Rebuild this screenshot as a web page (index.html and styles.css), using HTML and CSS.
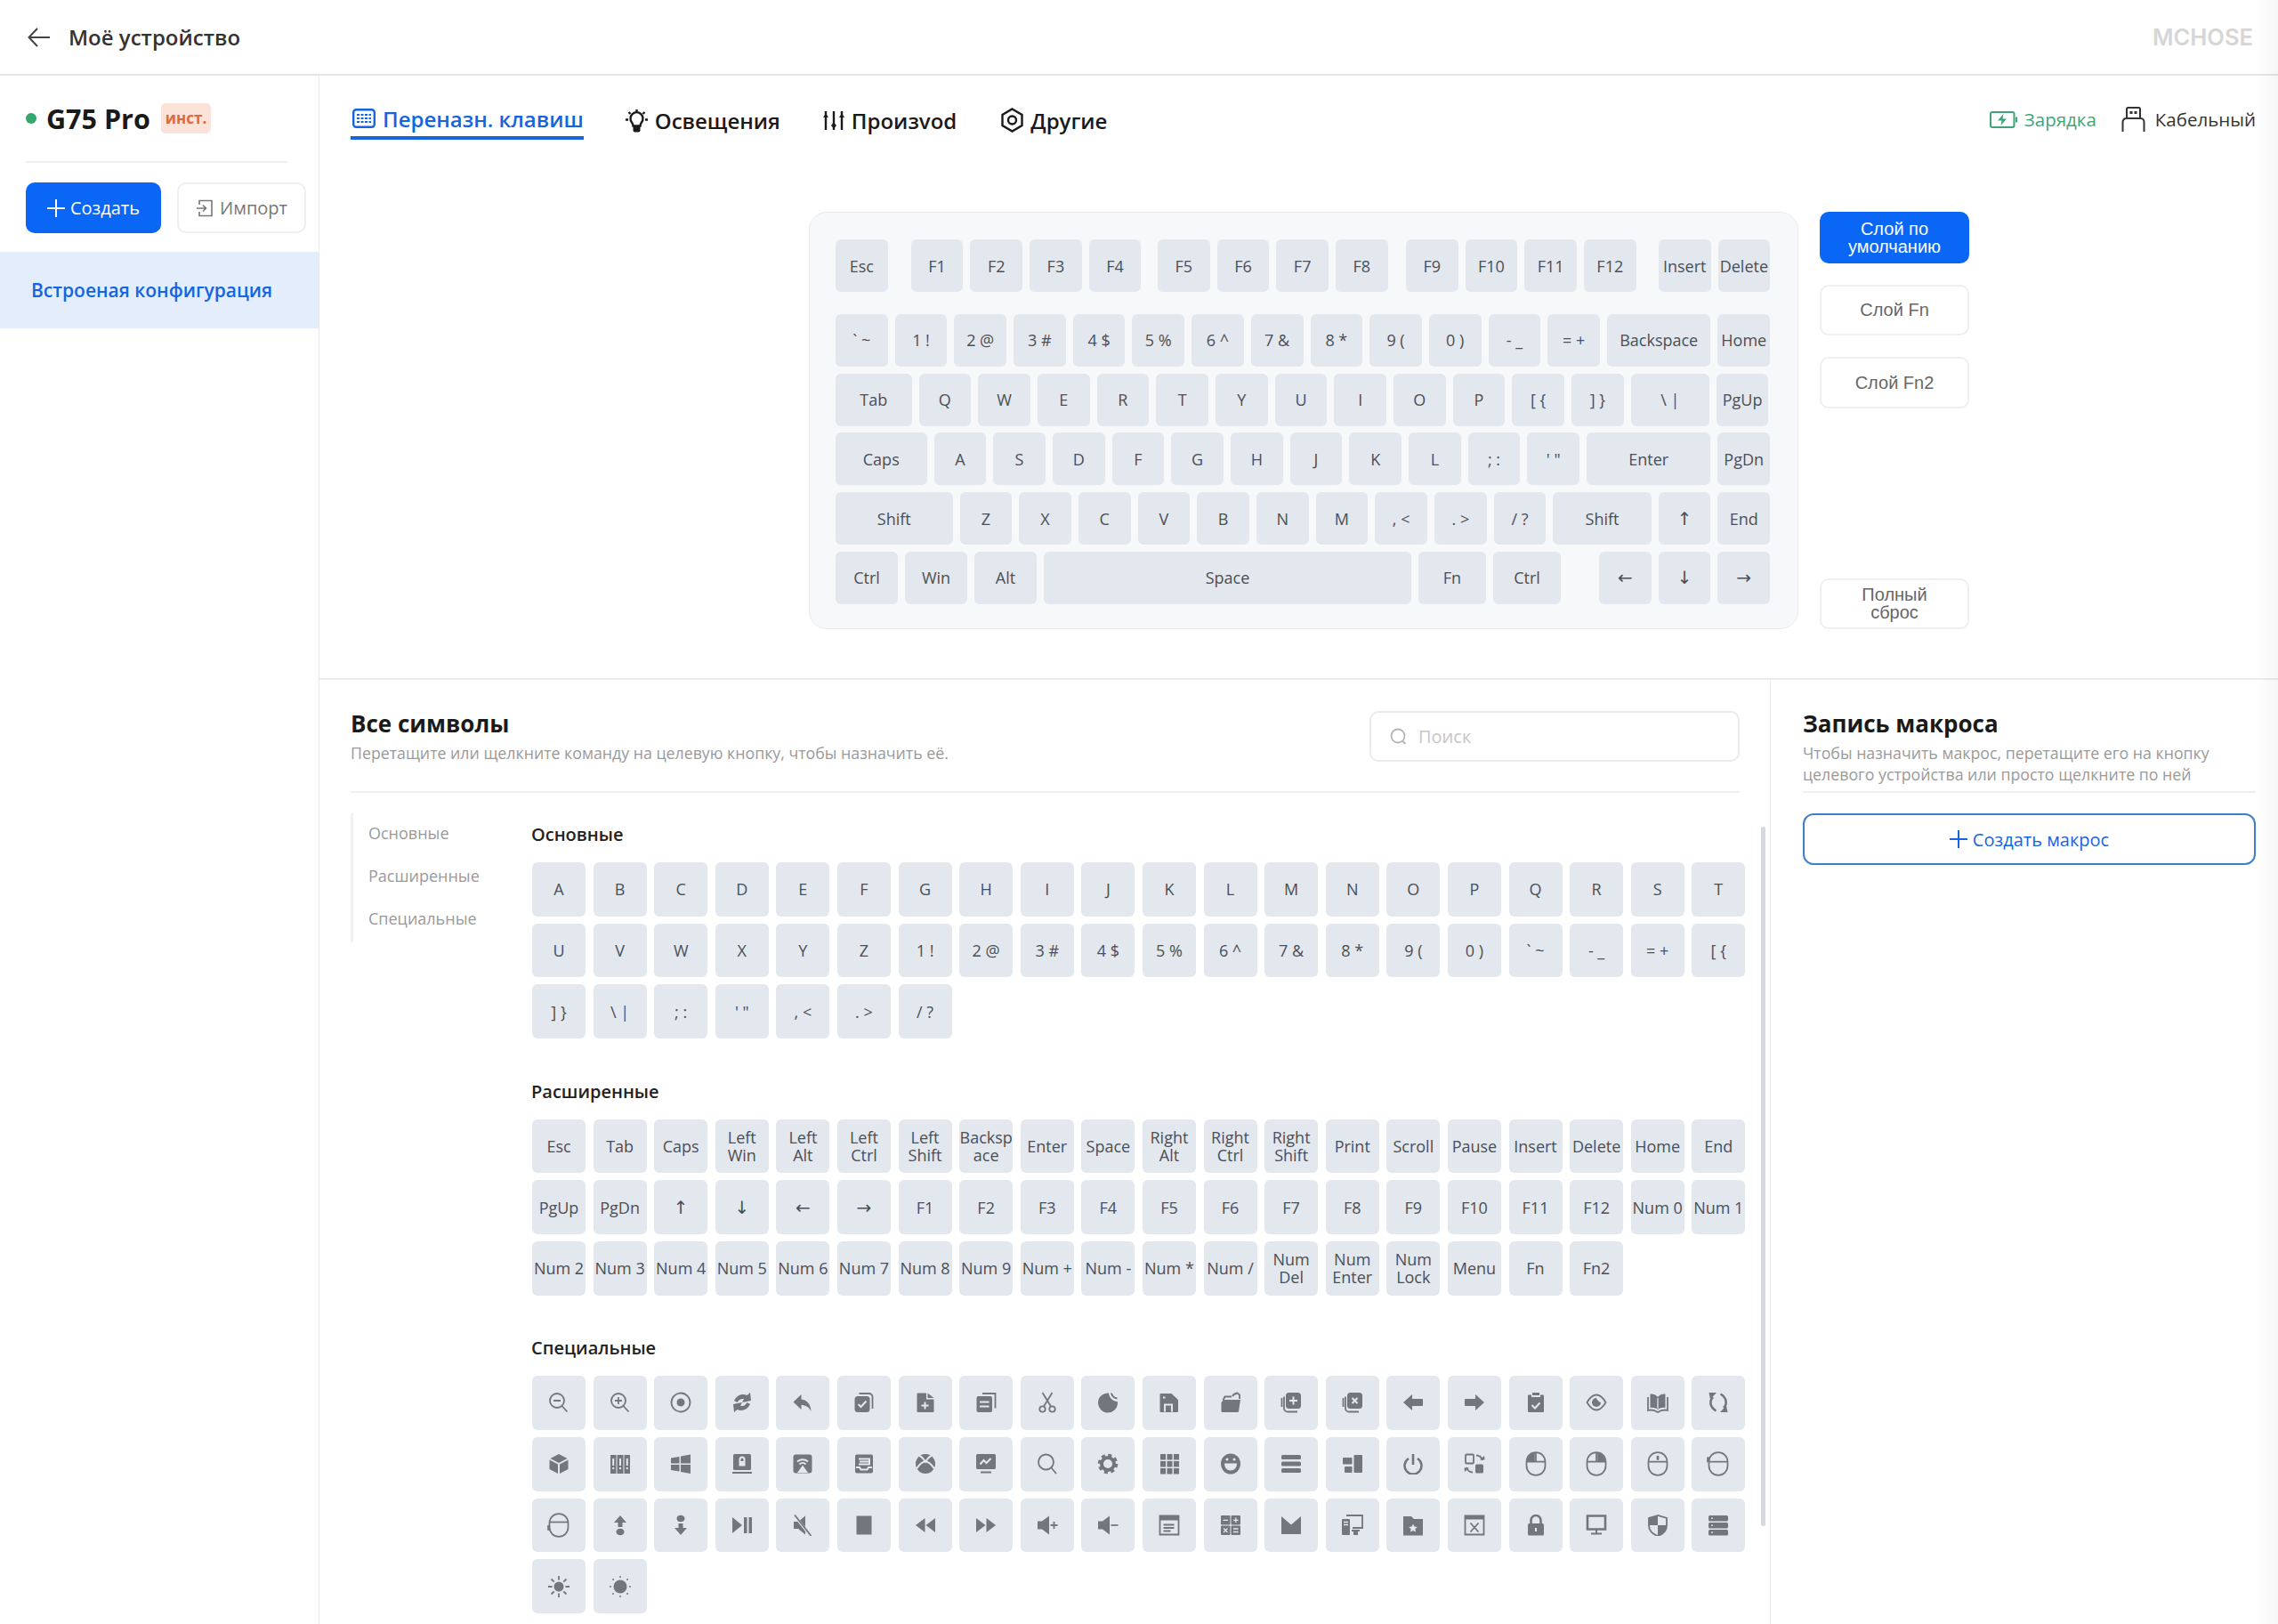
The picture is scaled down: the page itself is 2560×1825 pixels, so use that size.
FILE: index.html
```html
<!DOCTYPE html>
<html lang="ru">

<head>
    <meta charset="utf-8" />
    <title>MCHOSE</title>
    <link rel="stylesheet" href="styles.css">
</head>

<body>
    <header class="topbar">
        <svg class="back" viewBox="0 0 28 28"><path d="M26 14H3M12 4 2.5 14 12 24" /></svg>
        <span class="page-title">Моё устройство</span>
        <span class="brand">MCHOSE</span>
    </header>

    <div class="page">
        <aside class="sidebar">
            <div class="device">
                <span class="dot"></span>
                <span class="device-name">G75 Pro</span>
                <span class="badge">инст.</span>
            </div>
            <div class="side-actions">
                <button class="btn-create"><svg viewBox="0 0 20 20"><path d="M10 0v20M0 10h20" /></svg>Создать</button>
                <button class="btn-import"><svg viewBox="0 0 20 20"><path d="M4 6V1.5h14v17H4V14M1 10h10M8 6.5l3.5 3.5L8 13.5" /></svg>Импорт</button>
            </div>
            <div class="profile">Встроеная конфигурация</div>
        </aside>

        <main class="main">
            <nav class="tabs">
                <a class="tab tab-keys active">
                    <svg viewBox="0 0 26 22"><rect x="1.2" y="1.2" width="23.6" height="19.6" rx="3" /><path class="dash" d="M5 7h16M5 11h16M5 15h16" /></svg>
                    Переназн. клавиш
                </a>
                <a class="tab tab-light">
                    <svg viewBox="0 0 27 27"><path d="M8 15.5a7 7 0 1 1 11 0c-1 1.3-1.5 2.5-1.5 4h-8c0-1.5-.5-2.7-1.5-4ZM13.5 1v3M4.5 4l2 2M22.5 4l-2 2M1 12.5h3M23 12.5h3" /><path class="solid" d="M9.5 20h8v4.5a2 2 0 0 1-2 2h-4a2 2 0 0 1-2-2Z" /></svg>
                    Освещения
                </a>
                <a class="tab tab-sliders">
                    <svg viewBox="0 0 24 23"><path d="M3 1v21M12 1v21M21 1v21" /><path class="solid" d="M3 3.5 6 8H0ZM12 13.5l3 3.5-3 3.5L9 17ZM21 3.5 24 8h-6Z" /></svg>
                    Произvod
                </a>
                <a class="tab tab-hex">
                    <svg viewBox="0 0 25 28"><path d="M12.5 1.5 23.5 8v12l-11 6.500L1.5 20V8Z" /><circle cx="12.5" cy="14" r="4.5" /></svg>
                    Другие
                </a>
                <span class="status status-charge">
                    <svg viewBox="0 0 31 19"><rect x="1" y="1" width="26.5" height="17" rx="2" /><path d="M30 6.5v6" /><path class="bolt" d="M15.5 3 9 10.5h4.5L12.5 16l6.5-7.5h-4.5Z" /></svg>
                    Зарядка
                </span>
                <span class="status status-wire">
                    <svg viewBox="0 0 27 28"><path d="M1.5 28V17a4 4 0 0 1 4-4h16a4 4 0 0 1 4 4v11M6 13V2.5A1.5 1.5 0 0 1 7.5 1h12A1.5 1.5 0 0 1 21 2.5V13" /><path class="bolt" d="M9.5 5h3v3h-3zM14.5 5h3v3h-3z" /></svg>
                    Кабельный
                </span>
            </nav>

            <section class="keyboard-area">
                <div class="keyboard">
                    <div class="kb-row kb-fn">
                        <div class="key">Esc</div>
                        <div class="key gap-f1">F1</div><div class="key">F2</div><div class="key">F3</div><div class="key">F4</div>
                        <div class="key gap-f5">F5</div><div class="key">F6</div><div class="key">F7</div><div class="key">F8</div>
                        <div class="key gap-f9">F9</div><div class="key">F10</div><div class="key">F11</div><div class="key">F12</div>
                        <div class="key gap-ins">Insert</div><div class="key">Delete</div>
                    </div>
                    <div class="kb-row">
                        <div class="key">` ~</div><div class="key">1 !</div><div class="key">2 @</div><div class="key">3 #</div><div class="key">4 $</div><div class="key">5 %</div><div class="key">6 ^</div><div class="key">7 &amp;</div><div class="key">8 *</div><div class="key">9 (</div><div class="key">0 )</div><div class="key">- _</div><div class="key">= +</div>
                        <div class="key w-back">Backspace</div><div class="key">Home</div>
                    </div>
                    <div class="kb-row">
                        <div class="key w-tab">Tab</div><div class="key">Q</div><div class="key">W</div><div class="key">E</div><div class="key">R</div><div class="key">T</div><div class="key">Y</div><div class="key">U</div><div class="key">I</div><div class="key">O</div><div class="key">P</div><div class="key">[ {</div><div class="key">] }</div>
                        <div class="key w-slash">\ |</div><div class="key">PgUp</div>
                    </div>
                    <div class="kb-row">
                        <div class="key w-caps">Caps</div><div class="key">A</div><div class="key">S</div><div class="key">D</div><div class="key">F</div><div class="key">G</div><div class="key">H</div><div class="key">J</div><div class="key">K</div><div class="key">L</div><div class="key">; :</div><div class="key">' "</div>
                        <div class="key w-enter">Enter</div><div class="key">PgDn</div>
                    </div>
                    <div class="kb-row">
                        <div class="key w-lshift">Shift</div><div class="key">Z</div><div class="key">X</div><div class="key">C</div><div class="key">V</div><div class="key">B</div><div class="key">N</div><div class="key">M</div><div class="key">, &lt;</div><div class="key">. &gt;</div><div class="key">/ ?</div>
                        <div class="key w-rshift">Shift</div><div class="key arrow">↑</div><div class="key">End</div>
                    </div>
                    <div class="kb-row">
                        <div class="key w-mod">Ctrl</div><div class="key w-mod">Win</div><div class="key w-mod">Alt</div>
                        <div class="key w-space">Space</div>
                        <div class="key w-fn">Fn</div><div class="key w-fn">Ctrl</div>
                        <div class="key gap-arrows arrow">←</div><div class="key arrow">↓</div><div class="key arrow">→</div>
                    </div>
                </div>
                <div class="layers">
                    <button class="layer active">Слой по умолчанию</button>
                    <button class="layer">Слой Fn</button>
                    <button class="layer">Слой Fn2</button>
                    <button class="layer reset">Полный сброс</button>
                </div>
            </section>

            <section class="lower">
                <div class="symbols">
                    <div class="panel-head">
                        <div>
                            <h2>Все символы</h2>
                            <p>Перетащите или щелкните команду на целевую кнопку, чтобы назначить её.</p>
                        </div>
                        <div class="search">
                            <svg viewBox="0 0 20 20"><circle cx="9" cy="9" r="7.5" /><path d="M14 14.5l3.5 3.5" /></svg>
                            <span>Поиск</span>
                        </div>
                    </div>
                    <div class="symbols-body">
                        <ul class="cat-nav">
                            <li>Основные</li>
                            <li>Расширенные</li>
                            <li>Специальные</li>
                        </ul>
                        <div class="cats">
                            <h3>Основные</h3>
                            <div class="sym-grid">
                                <div class="key">A</div><div class="key">B</div><div class="key">C</div><div class="key">D</div><div class="key">E</div><div class="key">F</div><div class="key">G</div><div class="key">H</div><div class="key">I</div><div class="key">J</div><div class="key">K</div><div class="key">L</div><div class="key">M</div><div class="key">N</div><div class="key">O</div><div class="key">P</div><div class="key">Q</div><div class="key">R</div><div class="key">S</div><div class="key">T</div>
                                <div class="key">U</div><div class="key">V</div><div class="key">W</div><div class="key">X</div><div class="key">Y</div><div class="key">Z</div><div class="key">1 !</div><div class="key">2 @</div><div class="key">3 #</div><div class="key">4 $</div><div class="key">5 %</div><div class="key">6 ^</div><div class="key">7 &amp;</div><div class="key">8 *</div><div class="key">9 (</div><div class="key">0 )</div><div class="key">` ~</div><div class="key">- _</div><div class="key">= +</div><div class="key">[ {</div>
                                <div class="key">] }</div><div class="key">\ |</div><div class="key">; :</div><div class="key">' "</div><div class="key">, &lt;</div><div class="key">. &gt;</div><div class="key">/ ?</div>
                            </div>
                            <h3>Расширенные</h3>
                            <div class="sym-grid">
                                <div class="key">Esc</div><div class="key">Tab</div><div class="key">Caps</div><div class="key">Left<br>Win</div><div class="key">Left<br>Alt</div><div class="key">Left<br>Ctrl</div><div class="key">Left<br>Shift</div><div class="key">Backsp<br>ace</div><div class="key">Enter</div><div class="key">Space</div><div class="key">Right<br>Alt</div><div class="key">Right<br>Ctrl</div><div class="key">Right<br>Shift</div><div class="key">Print</div><div class="key">Scroll</div><div class="key">Pause</div><div class="key">Insert</div><div class="key">Delete</div><div class="key">Home</div><div class="key">End</div>
                                <div class="key">PgUp</div><div class="key">PgDn</div><div class="key arrow">↑</div><div class="key arrow">↓</div><div class="key arrow">←</div><div class="key arrow">→</div><div class="key">F1</div><div class="key">F2</div><div class="key">F3</div><div class="key">F4</div><div class="key">F5</div><div class="key">F6</div><div class="key">F7</div><div class="key">F8</div><div class="key">F9</div><div class="key">F10</div><div class="key">F11</div><div class="key">F12</div><div class="key">Num 0</div><div class="key">Num 1</div>
                                <div class="key">Num 2</div><div class="key">Num 3</div><div class="key">Num 4</div><div class="key">Num 5</div><div class="key">Num 6</div><div class="key">Num 7</div><div class="key">Num 8</div><div class="key">Num 9</div><div class="key">Num +</div><div class="key">Num -</div><div class="key">Num *</div><div class="key">Num /</div><div class="key">Num<br>Del</div><div class="key">Num<br>Enter</div><div class="key">Num<br>Lock</div><div class="key">Menu</div><div class="key">Fn</div><div class="key">Fn2</div>
                            </div>
                            <h3>Специальные</h3>
                            <div class="sym-grid icons">
                                <!-- row 1 -->
                                <div class="key"><svg viewBox="0 0 24 24"><g class="ln"><circle cx="10" cy="10" r="8" /><path d="M6 10h8M15.5 16l6 6.5" /></g></svg></div>
                                <div class="key"><svg viewBox="0 0 24 24"><g class="ln"><circle cx="10" cy="10" r="8" /><path d="M6 10h8M10 6v8M15.5 16l6 6.5" /></g></svg></div>
                                <div class="key"><svg viewBox="0 0 24 24"><circle class="ln" cx="12" cy="12" r="10.5" /><circle cx="12" cy="12" r="4.5" /></svg></div>
                                <div class="key"><svg viewBox="0 0 24 24"><path d="M3 10l3.5 2c2-3.5 4.5-4.5 7.5-4l-2 4 10-2-1-9-3.500 3C12 1.5 6 4 3 10ZM21 14l-3.500-2c-2 3.500-4.500 4.500-7.500 4l2-4-10 2 1 9 3.500-3C12 22.500 18 20 21 14Z" /></svg></div>
                                <div class="key"><svg viewBox="0 0 24 24"><path d="M10.5 3 1.5 11.5l9 8.5v-5c5 0 8.5 2 11 7-.5-8-4.5-13-11-13.5Z" /></svg></div>
                                <div class="key"><svg viewBox="0 0 24 24"><rect x="1.5" y="5" width="17" height="18" rx="3.5" /><path class="ln" d="M6.5 2h11a4 4 0 0 1 4 4v13" /><path class="cut" d="M5.5 14l3 3 6-6.5" /></svg></div>
                                <div class="key"><svg viewBox="0 0 24 24"><path d="M2.5 2.5a1 1 0 0 1 1-1h9.500v7h8.500v13.500a1 1 0 0 1-1 1H3.5a1 1 0 0 1-1-1ZM14.5 1.5l7 5.500h-7Z" /><path class="cut" d="M7.5 15.5h8M11.5 11.5v8" /></svg></div>
                                <div class="key"><svg viewBox="0 0 24 24"><rect x="1.5" y="5" width="17.5" height="18" rx="2" /><path class="ln" d="M8 2h14.5v16.5" /><path class="cut" d="M5 11.5h10.5M5 16.5h10.5" /></svg></div>
                                <div class="key"><svg viewBox="0 0 24 24"><g class="ln"><circle cx="6.5" cy="19.5" r="3.2" /><circle cx="17.5" cy="19.5" r="3.2" /><path d="M8 16.5 17.5 1M16 16.5 6.5 1" /></g></svg></div>
                                <div class="key"><svg viewBox="0 0 24 24"><path d="M13 1.5a11 11 0 1 0 10 11.500c0-1-.1-1.500-.2-2C18 11 13.5 7 13 1.5Z" /><path class="ln" d="M16 1.5c.5 3 3 5.500 6.500 6" /></svg></div>
                                <div class="key"><svg viewBox="0 0 24 24"><path d="M1.5 3a1 1 0 0 1 1-1h12l7.500 7v13a1 1 0 0 1-1 1H2.500a1 1 0 0 1-1-1Z" /><path class="cut" d="M5 6.5h2.500M7 22.500v-8h8v8" /></svg></div>
                                <div class="key"><svg viewBox="0 0 24 24"><path d="M4 9h19l-2 13a1 1 0 0 1-1 1H2.5a1 1 0 0 1-1-1V12Z" /><path class="ln" d="M3.5 9.5 5.5 5.5h7.500M14 5C15 3 17 2 19.5 1.5l2.500 2V8" /></svg></div>
                                <div class="key"><svg viewBox="0 0 24 24"><rect x="6" y="1" width="17" height="18" rx="3.5" /><path class="ln" d="M4 5.5v13a4 4 0 0 0 4 4h11M1.500 7v10" /><path class="cut" d="M10 10h9M14.5 5.5v9" /></svg></div>
                                <div class="key"><svg viewBox="0 0 24 24"><rect x="6" y="1" width="17" height="18" rx="3.5" /><path class="ln" d="M4 5.5v13a4 4 0 0 0 4 4h11M1.500 7v10" /><path class="cut" d="M11.5 7l6 6M17.5 7l-6 6" /></svg></div>
                                <div class="key"><svg viewBox="0 0 24 24"><path d="M1 12 11 3v5h11.5a1 1 0 0 1 .5 1v6a1 1 0 0 1-.5 1H11v5Z" /></svg></div>
                                <div class="key"><svg viewBox="0 0 24 24"><path d="M23 12 13 3v5H1.5a1 1 0 0 0-.5 1v6a1 1 0 0 0 .5 1H13v5Z" /></svg></div>
                                <div class="key"><svg viewBox="0 0 24 24"><path d="M3 4.5a1 1 0 0 1 1-1h3v2.500h10V3.500h3a1 1 0 0 1 1 1V22a1 1 0 0 1-1 1H4a1 1 0 0 1-1-1ZM8 1h8v3H8Z" /><path class="cut" d="M7.5 15l3.5 3.500 5.500-6" /></svg></div>
                                <div class="key"><svg viewBox="0 0 24 24"><path class="ln" d="M1.5 12C5 6 9 3.5 12 3.5S19 6 22.5 12C19 18 15 20.5 12 20.5S5 18 1.5 12Z" /><path d="M12 7a5 5 0 1 0 5 5 4 4 0 0 1-3-2 4 4 0 0 1-2-3Z" /></svg></div>
                                <div class="key"><svg viewBox="0 0 24 24"><path d="M12 6C10 3 6 2 3.5 2.5V18c3-.5 6 0 8.500 2 2.500-2 5.500-2.500 8.500-2V2.500C18 2 14 3 12 6Z" /><path class="cut thin" d="M12 7v12" /><path class="ln" d="M1 6v15c3.5-1 8 0 11 2 3-2 7.500-3 11-2V6" /></svg></div>
                                <div class="key"><svg viewBox="0 0 24 24"><path class="ln heavy" d="M6 6C2 10 2 17 9.5 21.5M18 18C22 14 22 7 14.5 2.5" /><path d="M1.5 1h8.500L3 8.500ZM22.500 23H14l7-7.500Z" /></svg></div>
                                <!-- row 2 -->
                                <div class="key"><svg viewBox="0 0 24 24"><path d="M12 1 2.5 6 12 11l9.5-5ZM1.5 7.5V18l9.500 5V12.500ZM22.500 7.500 13 12.500V23l9.500-5Z" /></svg></div>
                                <div class="key"><svg viewBox="0 0 24 24"><path d="M1 2h6.5v21H1ZM8.5 2h7v21h-7ZM16.5 2H23v21h-6.500Z" /><path class="cut" d="M4.2 6v8M12 6v8M19.8 6v8M4.2 16v2M12 16v2M19.8 16v2" /></svg></div>
                                <div class="key"><svg viewBox="0 0 24 24"><path d="M1 5.5 10.5 4v7.500H1ZM12 3.500 23 1.500v10H12ZM1 13h9.500v7.500L1 19ZM12 13h11v10l-11-2Z" /></svg></div>
                                <div class="key"><svg viewBox="0 0 24 24"><rect x="2" y="1" width="20" height="18" rx="1.5" /><rect x="1" y="21" width="22" height="2" /><path class="cut" d="M9.5 9V7a2.500 2.500 0 0 1 5 0v2" /><rect class="paper" x="8.5" y="9" width="7" height="5.5" /></svg></div>
                                <div class="key"><svg viewBox="0 0 24 24"><rect x="1.5" y="1.5" width="21" height="21" rx="3" /><path class="cut" d="M6 9.5c3.500-3 8.500-3 12 0M8.500 12.500c2-2 5-2 7 0" /><path class="paper" d="M12 13.5 18 22H6Z" /></svg></div>
                                <div class="key"><svg viewBox="0 0 24 24"><path d="M2 3.5a2 2 0 0 1 2-2h16a2 2 0 0 1 2 2v17a2 2 0 0 1-2 2H4a2 2 0 0 1-2-2Z" /><path class="cut" d="M6 6.5h12v6H6M7 9.500h10M3 16h4l1.500 2.500h7L17 16h4" /></svg></div>
                                <div class="key"><svg viewBox="0 0 24 24"><circle cx="12" cy="12" r="11" /><path class="cut" d="M5 2.5c3 1.500 5 4 7 7 2-3 4-5.500 7-7M2 17.500c2-3 5-8 10-8s8 5 10 8" /></svg></div>
                                <div class="key"><svg viewBox="0 0 24 24"><rect x="1" y="1" width="22" height="17" rx="1.5" /><rect x="6" y="20.5" width="12" height="2" /><path class="cut" d="M5.5 12.5l4-4.500 3 3 5-5" /></svg></div>
                                <div class="key"><svg viewBox="0 0 24 24"><g class="ln"><circle cx="10.5" cy="10" r="8.5" /><path d="M16.5 16.5l5.500 6.500" /></g></svg></div>
                                <div class="key"><svg viewBox="0 0 24 24"><circle class="ln gear" cx="12" cy="12" r="9.5" /><circle class="ln gear-ring" cx="12" cy="12" r="7" /></svg></div>
                                <div class="key"><svg viewBox="0 0 24 24"><path d="M2 1h6v6.500H2ZM9.500 1h6v6.500h-6ZM17 1h6v6.500h-6ZM2 9h6v6.500H2ZM9.500 9h6v6.500h-6ZM17 9h6v6.500h-6ZM2 17h6v6.500H2ZM9.500 17h6v6.500h-6ZM17 17h6v6.500h-6Z" /></svg></div>
                                <div class="key"><svg viewBox="0 0 24 24"><ellipse cx="12" cy="12" rx="11" ry="11.5" /><path class="paper" d="M5 11.5h14c0 5-3 8-7 8s-7-3-7-8Z" /><circle class="paper" cx="8" cy="7" r="1.5" /><circle class="paper" cx="16" cy="7" r="1.5" /></svg></div>
                                <div class="key"><svg viewBox="0 0 24 24"><rect x="1" y="2" width="22" height="5" rx="1.5" /><rect x="1" y="9.5" width="22" height="5" rx="1.5" /><rect x="1" y="17" width="22" height="5" rx="1.5" /></svg></div>
                                <div class="key"><svg viewBox="0 0 24 24"><rect x="1" y="5" width="10.5" height="7.5" rx="1" /><rect x="13.5" y="2" width="9.5" height="20" rx="1" /><rect x="3" y="15" width="8.5" height="7" rx="1" /></svg></div>
                                <div class="key"><svg viewBox="0 0 24 24"><path class="ln heavy" d="M7 6a9.500 9.500 0 1 0 10 0M12 1v12" /></svg></div>
                                <div class="key"><svg viewBox="0 0 24 24"><rect class="ln" x="2" y="1.5" width="9" height="10" rx="1" /><rect x="13" y="12.5" width="9" height="10" rx="1.5" /><path class="ln" d="M14 2.5c3.500 0 6 2.500 7 5.500M10 21.500c-3.500 0-6-2.500-7-5.500" /><path d="M18 7.5h5.500L23 3ZM6 16.500H.5L1 21Z" /></svg></div>
                                <div class="key tall"><svg viewBox="0 0 24 24"><rect class="ln" x="3" y="1" width="18" height="22" rx="9" /><path d="M11 1.5V9.500H3.500C3.500 5 6.500 1.500 11 1.500Z" /><path class="ln" d="M3 10h18M12 1v9" /></svg></div>
                                <div class="key tall"><svg viewBox="0 0 24 24"><rect class="ln" x="3" y="1" width="18" height="22" rx="9" /><path d="M13 1.5V9.500h7.500C20.500 5 17.500 1.500 13 1.500Z" /><path class="ln" d="M3 10h18M12 1v9" /></svg></div>
                                <div class="key tall"><svg viewBox="0 0 24 24"><rect class="ln" x="3" y="1" width="18" height="22" rx="9" /><path class="ln" d="M3 10h18" /><rect x="10.8" y="4" width="2.4" height="4.5" rx="1.2" /></svg></div>
                                <div class="key tall"><svg viewBox="0 0 24 24"><rect class="ln" x="3" y="1" width="18" height="22" rx="9" /><path class="ln" d="M3 10h18" /><path d="M1 5.5h2.500v5H1Z" /></svg></div>
                                <!-- row 3 -->
                                <div class="key tall"><svg viewBox="0 0 24 24"><rect class="ln" x="3" y="1" width="18" height="22" rx="9" /><path class="ln" d="M3 9h18" /><path d="M1 12h2.500v5H1Z" /></svg></div>
                                <div class="key"><svg viewBox="0 0 24 24"><path d="M12 1 19 9h-4.500v5h-5V9H5Z" /><ellipse cx="12" cy="19.5" rx="4.5" ry="3.8" /></svg></div>
                                <div class="key"><svg viewBox="0 0 24 24"><path d="M12 23 19 15h-4.500v-5h-5v5H5Z" /><ellipse cx="12" cy="4.5" rx="4.5" ry="3.8" /></svg></div>
                                <div class="key"><svg viewBox="0 0 24 24"><path d="M1 3l11 9-11 9ZM14 3h3.500v18H14ZM19.500 3H23v18h-3.500Z" /></svg></div>
                                <div class="key"><svg viewBox="0 0 24 24"><path d="M2 8h5l8-6.500v21L7 16H2Z" /><path class="cut wide" d="M2 0l19 24" /><path class="ln" d="M3 .5l18.500 23.500" /></svg></div>
                                <div class="key"><svg viewBox="0 0 24 24"><path d="M3.5 1.5h17v21h-17Z" /></svg></div>
                                <div class="key"><svg viewBox="0 0 24 24"><path d="M11.5 4v16L1 12ZM23 4v16L12.500 12Z" /></svg></div>
                                <div class="key"><svg viewBox="0 0 24 24"><path d="M1 4v16l10.500-8ZM12.500 4v16L23 12Z" /></svg></div>
                                <div class="key"><svg viewBox="0 0 24 24"><path d="M1 7.5h5l8-6v21l-8-6H1Z" /><path class="ln" d="M15.5 12h8M19.5 8v8" /></svg></div>
                                <div class="key"><svg viewBox="0 0 24 24"><path d="M1 7.5h5l8-6v21l-8-6H1Z" /><path class="ln" d="M15.5 12h8" /></svg></div>
                                <div class="key"><svg viewBox="0 0 24 24"><path d="M1.5 1.5h21v21h-21Z" class="ln" /><path d="M1.5 1.5h21v5h-21Z" /><path class="ln" d="M5.5 11.5h12M5.5 15h12M5.5 18.5h8" /></svg></div>
                                <div class="key"><svg viewBox="0 0 24 24"><rect x="1" y="1" width="10.5" height="10.5" rx="1" /><rect x="12.5" y="1" width="10.5" height="10.5" rx="1" /><rect x="1" y="12.5" width="10.5" height="10.5" rx="1" /><rect x="12.5" y="12.5" width="10.5" height="10.5" rx="1" /><path class="cut thin" d="M3.5 6.3h5.500M15 6.3h5.500M17.8 3.500v5.500M4 15.500l4.500 4.500M8.500 15.500 4 20M15 16h5.500M15 19.500h5.500" /></svg></div>
                                <div class="key"><svg viewBox="0 0 24 24"><path d="M1 2l11 9.5L23 2v20H1Z" /></svg></div>
                                <div class="key"><svg viewBox="0 0 24 24"><path class="ln" d="M5 1h18v14H12" /><rect x="0" y="5" width="9" height="18" rx="1" /><path class="cut thin" d="M2 8.5h5M2 11.5h5" /><path d="M11 17h9v2h-9ZM13 19h5v4h-5Z" /></svg></div>
                                <div class="key"><svg viewBox="0 0 24 24"><path d="M1 2h9l3 3h10v18.500H1Z" /><path class="paper" d="M12 10.5l1.500 3 3.300.4-2.400 2.300.6 3.300L12 17.900 9 19.500l.6-3.300L7.200 13.900l3.300-.4Z" /></svg></div>
                                <div class="key"><svg viewBox="0 0 24 24"><path class="ln" d="M1.5 1.5h21v21h-21Z" /><path d="M1.5 1.5h21v4h-21Z" /><path class="ln" d="M7.5 9.5l9 10M16.5 9.5l-9 10" /></svg></div>
                                <div class="key"><svg viewBox="0 0 24 24"><path class="ln heavy" d="M6.5 11V6.5a5.500 5.500 0 0 1 11 0V11" /><rect x="3" y="10" width="18" height="13.5" rx="1.5" /><path class="cut" d="M12 15v4" /></svg></div>
                                <div class="key"><svg viewBox="0 0 24 24"><path class="ln heavy" d="M2 1.5h20v15H2Z" /><path d="M11 17h2v3.500h-2ZM6 20.500h12v2H6Z" /></svg></div>
                                <div class="key"><svg viewBox="0 0 24 24"><path class="ln" d="M12 1 2 4v8c0 6 4 10 10 12 6-2 10-6 10-12V4Z" /><path d="M12 1 2 4v8h10ZM12 12h10c0 6-4 10-10 12Z" /></svg></div>
                                <div class="key"><svg viewBox="0 0 24 24"><rect x="1" y="1" width="22" height="6.5" rx="1.5" /><rect x="1" y="9" width="22" height="6.5" rx="1.5" /><rect x="1" y="17" width="22" height="6.5" rx="1.5" /><path class="cut thin" d="M4 4.2h2M4 12.2h2M4 20.2h2" /></svg></div>
                                <!-- row 4 -->
                                <div class="key"><svg viewBox="0 0 24 24"><circle cx="12" cy="12" r="5.5" /><path class="ln" d="M12 0v4.500M12 19.500V24M0 12h4.500M19.500 12H24M3.500 3.500l3.200 3.200M17.300 17.300l3.200 3.200M20.500 3.500l-3.200 3.200M6.700 17.300l-3.200 3.200" /></svg></div>
                                <div class="key"><svg viewBox="0 0 24 24"><circle cx="12" cy="12" r="7.5" /><circle cx="12" cy="1" r="1" /><circle cx="12" cy="23" r="1" /><circle cx="1" cy="12" r="1" /><circle cx="23" cy="12" r="1" /><circle cx="4" cy="4" r="1" /><circle cx="20" cy="4" r="1" /><circle cx="4" cy="20" r="1" /><circle cx="20" cy="20" r="1" /></svg></div>
                            </div>
                        </div>
                    </div>
                    <div class="scrollbar"></div>
                </div>

                <div class="macro">
                    <div class="panel-head macro-head">
                        <h2>Запись макроса</h2>
                        <p>Чтобы назначить макрос, перетащите его на кнопку целевого устройства или просто щелкните по ней</p>
                    </div>
                    <button class="btn-macro"><svg viewBox="0 0 20 20"><path d="M10 0v20M0 10h20" /></svg>Создать макрос</button>
                </div>
            </section>
        </main>
    </div>
    <div class="edge-shade"></div>
</body>

</html>
```

FILE: styles.css
```css
* {
    box-sizing: border-box;
}

html,
body {
    margin: 0;
    padding: 0;
    height: 100%;
    overflow: hidden;
    background-color: #fff;
    font-family: "Open Sans", "Noto Sans", sans-serif;
    color: #222;
}

button {
    font-family: inherit;
    cursor: pointer;
}

/* top bar */
.topbar {
    display: flex;
    align-items: center;
    height: 85px;
    padding: 0 28px 0 30px;
    border-bottom: 2px solid #e3e5e8;
}

.back {
    width: 28px;
    height: 28px;
    margin-right: 19px;
    fill: none;
    stroke: #444;
    stroke-width: 2;
}

.page-title {
    font-size: 24px;
    font-weight: 600;
    color: #333;
}

.brand {
    margin-left: auto;
    font-family: "Inter", sans-serif;
    font-size: 25.5px;
    font-weight: 600;
    color: #d6d6d6;
}

.page {
    display: flex;
    height: 1740px;
}

/* sidebar */
.sidebar {
    flex: 0 0 359px;
    border-right: 1px solid #e8eaed;
}

.device {
    display: flex;
    align-items: center;
    height: 98px;
    margin: 0 35px 0 29px;
    border-bottom: 2px solid #eeeff1;
}

.dot {
    width: 12px;
    height: 12px;
    margin-right: 11px;
    border-radius: 50%;
    background-color: #35a86f;
}

.device-name {
    font-size: 30.5px;
    font-weight: 700;
    color: #1a1a1a;
}

.badge {
    margin-left: 12px;
    padding: 4px 5px;
    border-radius: 5px;
    background-color: #fbe3da;
    color: #e0693a;
    font-size: 17px;
    font-weight: 700;
    line-height: 26px;
}

.side-actions {
    display: flex;
    gap: 18px;
    margin: 22px 14px 21px 29px;
}

.side-actions button {
    display: flex;
    align-items: center;
    justify-content: center;
    height: 57px;
    border-radius: 10px;
    font-size: 20px;
}

.btn-create {
    width: 152px;
    border: 0;
    background-color: #0a66f5;
    color: #fff;
}

.btn-create svg {
    width: 20px;
    height: 20px;
    margin-right: 6px;
    fill: none;
    stroke: #fff;
    stroke-width: 2;
}

.btn-import {
    width: 145px;
    border: 2px solid #eeeff1;
    background-color: #fff;
    color: #777;
}

.btn-import svg {
    width: 20px;
    height: 20px;
    margin-right: 7px;
    fill: none;
    stroke: #777;
    stroke-width: 1.6;
}

.profile {
    display: flex;
    align-items: center;
    height: 86px;
    padding-left: 35px;
    background-color: #e3edfc;
    color: #1565e0;
    font-size: 21px;
    font-weight: 600;
}

/* tabs */
.main {
    flex: 1;
    min-width: 0;
}

.tabs {
    display: flex;
    align-items: flex-start;
    height: 153px;
    padding: 28px 25px 0 35px;
}

.tab {
    display: flex;
    align-items: center;
    gap: 8px;
    height: 44px;
    margin-right: 46px;
    color: #1a1a1a;
    font-size: 24px;
    font-weight: 600;
}

.tab svg {
    fill: none;
    stroke: #1a1a1a;
    stroke-width: 2.4;
}

.tab .solid {
    fill: #1a1a1a;
    stroke: none;
}

.tab-keys svg {
    width: 26px;
    height: 22px;
}

.tab.active {
    padding-left: 2px;
    border-bottom: 4px solid #1565e0;
    color: #1565e0;
}

.tab.active svg {
    stroke: #1565e0;
}

.tab .dash {
    stroke-width: 2;
    stroke-dasharray: 3 1.5;
}

.tab-light {
    gap: 7px;
    margin-right: 48px;
}

.tab-light svg {
    width: 27px;
    height: 27px;
}

.tab-sliders {
    margin-right: 50px;
}

.tab-sliders svg {
    width: 24px;
    height: 23px;
}

.tab-hex svg {
    width: 25px;
    height: 28px;
}

.status {
    display: flex;
    align-items: center;
    height: 42px;
    font-size: 20.5px;
}

.status svg {
    fill: none;
    stroke-width: 2;
}

.status .bolt {
    stroke: none;
}

.status-charge {
    gap: 8px;
    margin-left: auto;
    color: #3fa579;
}

.status-charge svg {
    width: 31px;
    height: 19px;
    stroke: #3fa579;
}

.status-charge .bolt {
    fill: #3fa579;
}

.status-wire {
    gap: 11px;
    margin-left: 28px;
    color: #333;
}

.status-wire svg {
    width: 27px;
    height: 28px;
    stroke: #333;
}

.status-wire .bolt {
    fill: #333;
}

/* keyboard */
.keyboard-area {
    display: flex;
    gap: 24px;
    height: 524px;
    padding-left: 550px;
}

.keyboard {
    display: flex;
    flex-direction: column;
    gap: 7.7px;
    width: 1112px;
    height: 469px;
    padding: 30px 0 0 29px;
    border: 1px solid #e9ebef;
    border-radius: 20px;
    background-color: #f7f8fa;
}

.kb-row {
    display: flex;
    gap: 8px;
}

.kb-fn {
    margin-bottom: 17.3px;
}

.key {
    display: flex;
    align-items: center;
    justify-content: center;
    flex: 0 0 auto;
    width: 58.7px;
    height: 59px;
    border-radius: 6px;
    background-color: #e3e7ee;
    color: #4b4f57;
    font-size: 18px;
    line-height: 20px;
    text-align: center;
}

.arrow {
    font-family: "DejaVu Sans", sans-serif;
    font-size: 20px;
}

.gap-f1 { margin-left: 18px; }
.gap-f5 { margin-left: 10.5px; }
.gap-f9 { margin-left: 12.2px; }
.gap-ins { margin-left: 17.2px; }
.gap-arrows { margin-left: 35px; }

.w-back { width: 116.5px; }
.w-tab { width: 85.5px; }
.w-slash { width: 88px; }
.w-caps { width: 102.5px; }
.w-enter { width: 139.3px; }
.w-lshift { width: 131.5px; }
.w-rshift { width: 110.3px; }
.w-mod { width: 70px; }
.w-space { width: 413px; }
.w-fn { width: 76px; }

.layers {
    display: flex;
    flex-direction: column;
    gap: 24px;
    width: 168px;
    height: 469px;
}

.layer {
    height: 57.5px;
    padding: 0 20px;
    border: 2px solid #eeeff1;
    border-radius: 10px;
    background-color: #fff;
    color: #666;
    font-family: "Liberation Sans", sans-serif;
    font-size: 20px;
    line-height: 20px;
}

.layer.active {
    border: 0;
    background-color: #0a66f5;
    color: #fff;
}

.layer.reset {
    margin-top: auto;
}

/* lower panels */
.lower {
    display: flex;
    height: 1063px;
    border-top: 2px solid #e9ebee;
}

.symbols {
    position: relative;
    width: 1631px;
    padding: 0 34px 0 35px;
    border-right: 1px solid #e8eaed;
}

.panel-head {
    display: flex;
    justify-content: space-between;
    height: 127px;
    padding-top: 31px;
    border-bottom: 2px solid #eeeff1;
}

h2 {
    margin: 0;
    font-size: 26px;
    font-weight: 700;
    line-height: 36px;
    color: #1a1a1a;
}

.panel-head p {
    margin: 3px 0 0;
    color: #9a9a9a;
    font-size: 17.75px;
    line-height: 24px;
}

.search {
    display: flex;
    align-items: center;
    width: 416px;
    height: 57px;
    margin-top: 4px;
    padding-left: 21px;
    border: 2px solid #e9ebee;
    border-radius: 10px;
    color: #c6c6c6;
    font-size: 20px;
}

.search svg {
    width: 20px;
    height: 20px;
    margin-right: 12px;
    fill: none;
    stroke: #b5b5b5;
    stroke-width: 1.8;
}

.symbols-body {
    display: flex;
}

.cat-nav {
    flex: 0 0 204px;
    height: 145px;
    margin: 23px 0 0;
    padding: 9px 0 0 17px;
    border-left: 3px solid #f0f1f3;
    list-style: none;
    color: #9a9a9a;
    font-size: 18px;
    line-height: 26px;
}

.cat-nav li {
    margin-bottom: 22px;
}

.cats {
    width: 1366px;
    padding-top: 32px;
}

h3 {
    margin: 0 0 16px;
    margin-left: -1px;
    font-size: 20px;
    font-weight: 600;
    line-height: 30px;
    color: #222;
}

.sym-grid {
    display: grid;
    grid-template-columns: repeat(20, 60px);
    grid-auto-rows: 60.7px;
    column-gap: 8.6px;
    row-gap: 8px;
    margin-bottom: 44.5px;
}

.sym-grid .key {
    width: 60px;
    height: 60.7px;
}

.icons svg {
    width: 24px;
    height: 24px;
    fill: #73767f;
}

.icons .tall svg {
    width: 28px;
    height: 28px;
}

.icons .ln {
    fill: none;
    stroke: #73767f;
    stroke-width: 1.8;
}

.icons .tall .ln {
    stroke-width: 1.5;
}

.icons .heavy {
    stroke-width: 2.6;
}

.icons .gear {
    stroke-width: 3.5;
    stroke-dasharray: 4 3.46;
}

.icons .gear-ring {
    stroke-width: 4;
}

.icons .cut {
    fill: none;
    stroke: #e3e7ee;
    stroke-width: 2;
}

.icons .thin {
    stroke-width: 1.3;
}

.icons .wide {
    stroke-width: 3;
}

.icons .paper {
    fill: #e3e7ee;
}

.scrollbar {
    position: absolute;
    top: 165px;
    right: 5px;
    width: 5px;
    height: 786px;
    border-radius: 3px;
    background-color: #d5d9df;
}

/* macro panel */
.macro {
    width: 570px;
    padding: 0 25px 0 36px;
}

.macro-head {
    display: block;
}

.btn-macro {
    display: flex;
    align-items: center;
    justify-content: center;
    width: 100%;
    height: 58px;
    margin-top: 23px;
    border: 2px solid #3f7fc9;
    border-radius: 12px;
    background-color: #fff;
    color: #1565e0;
    font-size: 20px;
}

.btn-macro svg {
    width: 20px;
    height: 20px;
    margin-right: 6px;
    fill: none;
    stroke: #1565e0;
    stroke-width: 2;
}

/* faint shade along the right window edge */
.edge-shade {
    position: fixed;
    top: 0;
    right: 0;
    width: 24px;
    height: 100%;
    background: linear-gradient(to right, rgba(0, 0, 0, 0), rgba(0, 0, 0, 0.035));
    pointer-events: none;
}
```
